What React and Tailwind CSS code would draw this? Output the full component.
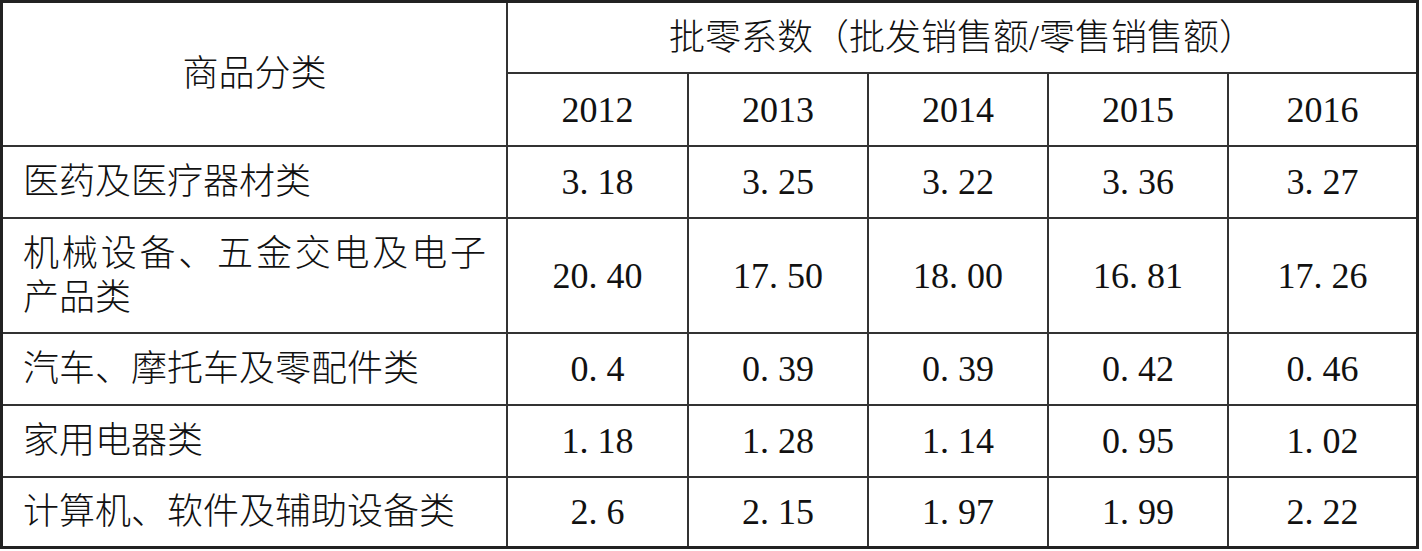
import React from "react";

const years = ["2012", "2013", "2014", "2015", "2016"];
const rows = [
  { name: "医药及医疗器材类", vals: ["3. 18", "3. 25", "3. 22", "3. 36", "3. 27"] },
  { name: "机械设备、五金交电及电子产品类", vals: ["20. 40", "17. 50", "18. 00", "16. 81", "17. 26"] },
  { name: "汽车、摩托车及零配件类", vals: ["0. 4", "0. 39", "0. 39", "0. 42", "0. 46"] },
  { name: "家用电器类", vals: ["1. 18", "1. 28", "1. 14", "0. 95", "1. 02"] },
  { name: "计算机、软件及辅助设备类", vals: ["2. 6", "2. 15", "1. 97", "1. 99", "2. 22"] },
];

export default function App() {
  return (
    <div
      className="bg-white w-[1422px] h-[551px] text-[#111] text-[36px] font-light"
      style={{ fontFamily: "'Liberation Serif', 'Noto Sans CJK SC', serif" }}
    >
      <div className="w-[1419px] border-[3px] border-[#222] bg-[#333] grid gap-[2px] grid-cols-[503px_179px_178px_178px_178px_1fr] grid-rows-[69px_71px_70px_113px_70px_70px_68px]">
        <div className="row-span-2 bg-white flex items-center justify-center">商品分类</div>
        <div className="col-span-5 bg-white flex items-center justify-center">
          批零系数（批发销售额/零售销售额）
        </div>
        {years.map((y) => (
          <div key={y} className="bg-white flex items-center justify-center">
            {y}
          </div>
        ))}
        {rows.map((r) => (
          <React.Fragment key={r.name}>
            <div className="bg-white flex items-center px-[20px]">
              <div className="w-full text-justify leading-[44px]">{r.name}</div>
            </div>
            {r.vals.map((v, i) => (
              <div key={i} className="bg-white flex items-center justify-center whitespace-pre">
                {v}
              </div>
            ))}
          </React.Fragment>
        ))}
      </div>
    </div>
  );
}
